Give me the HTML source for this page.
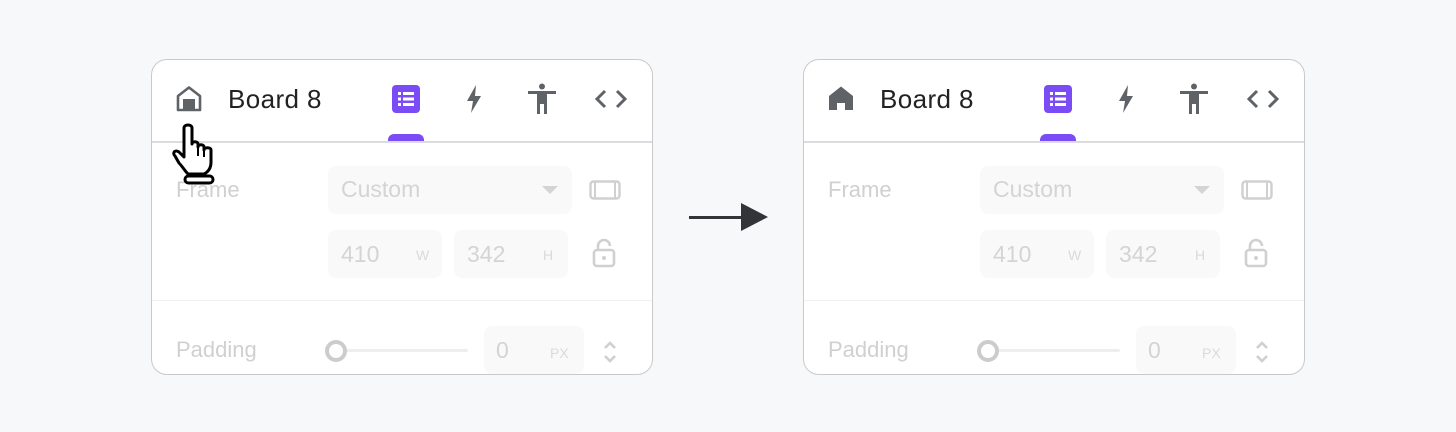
<!DOCTYPE html>
<html><head><meta charset="utf-8"><style>
*{margin:0;padding:0;box-sizing:border-box}
body{width:1456px;height:432px;background:#f7f8fa;position:relative;overflow:hidden;font-family:"Liberation Sans",Roboto,sans-serif}
.p{position:absolute;top:59px;width:502px;height:316px;background:#fff;border:1px solid #c9c9cc;border-radius:16px;overflow:hidden}
.a{position:absolute}
.t{position:absolute;font-size:26px;color:#222;top:24px;left:76px;letter-spacing:0.4px}
.hd{position:absolute;left:0;right:0;top:81px;height:2px;background:#dcdce0}
.ind{position:absolute;left:236px;top:74px;width:36px;height:8px;background:#7b4cf5;border-radius:6px 6px 0 0}
.lbl{position:absolute;font-size:22px;color:#d0d0d0}
.f{position:absolute;background:#f9f9f9;border-radius:8px}
.fv{position:absolute;font-size:23px;color:#d4d4d4}
.fu{position:absolute;font-size:14px;color:#dadada}
.d2{position:absolute;left:0;right:0;top:240px;height:1px;background:#f0f0f0}
</style></head><body>

<div class="p" style="left:151px">
  <svg class="a" style="left:24px;top:26px" width="26" height="26" viewBox="0 0 26 26"><path d="M2 24V10L13 1.5 24 10V24Z" fill="none" stroke="#5f6368" stroke-width="2.6" stroke-linejoin="round"/><rect x="7" y="13" width="12" height="11" fill="#5f6368"/></svg>
  <div class="t">Board 8</div>
  <svg class="a" style="left:240px;top:25px" width="28" height="28" viewBox="0 0 28 28"><rect width="28" height="28" rx="4" fill="#7b4cf5"/><g fill="#fff"><rect x="6" y="7" width="3" height="3"/><rect x="11" y="7" width="11" height="3"/><rect x="6" y="12.5" width="3" height="3"/><rect x="11" y="12.5" width="11" height="3"/><rect x="6" y="18" width="3" height="3"/><rect x="11" y="18" width="11" height="3"/></g></svg>
  <svg class="a" style="left:313px;top:24px" width="18" height="30" viewBox="0 0 18 30"><path d="M11 1L2 17h6L6 29l10-17h-6z" fill="#5f6368"/></svg>
  <svg class="a" style="left:375px;top:23px" width="30" height="32" viewBox="0 0 30 32"><circle cx="15" cy="3.5" r="3" fill="#5f6368"/><path d="M1 8h28v3H20v20h-3V21h-4v10h-3V11H1z" fill="#5f6368"/></svg>
  <svg class="a" style="left:443px;top:29px" width="32" height="20" viewBox="0 0 32 20"><path d="M10 2L2 10l8 8M22 2l8 8-8 8" fill="none" stroke="#5f6368" stroke-width="3"/></svg>
  <div class="ind"></div><div class="hd"></div>
  <div class="lbl" style="left:24px;top:117px">Frame</div>
  <div class="f" style="left:176px;top:106px;width:244px;height:48px"></div>
  <div class="fv" style="left:189px;top:116px">Custom</div>
  <svg class="a" style="left:390px;top:126px" width="16" height="9"><path d="M0 0h16L8 8z" fill="#d4d4d4"/></svg>
  <svg class="a" style="left:437px;top:120px" width="32" height="20"><rect x="1.5" y="1.5" width="29" height="17" rx="3" fill="none" stroke="#d0d0d0" stroke-width="2.4"/><path d="M6 2v16M26 2v16" stroke="#d0d0d0" stroke-width="2"/></svg>
  <div class="f" style="left:176px;top:170px;width:114px;height:48px"></div>
  <div class="fv" style="left:189px;top:181px">410</div><div class="fu" style="left:264px;top:187px">W</div>
  <div class="f" style="left:302px;top:170px;width:114px;height:48px"></div>
  <div class="fv" style="left:315px;top:181px">342</div><div class="fu" style="left:391px;top:187px">H</div>
  <svg class="a" style="left:440px;top:178px" width="24" height="30"><path d="M6 12V8a6 6 0 0 1 12 0" fill="none" stroke="#d0d0d0" stroke-width="2.6"/><rect x="2" y="12" width="20" height="16" rx="3" fill="none" stroke="#d0d0d0" stroke-width="2.6"/><circle cx="12" cy="20" r="2" fill="#d0d0d0"/></svg>
  <div class="d2"></div>
  <div class="lbl" style="left:24px;top:277px">Padding</div>
  <div class="a" style="left:180px;top:289px;width:136px;height:3px;background:#eee;border-radius:2px"></div>
  <div class="a" style="left:173px;top:280px;width:22px;height:22px;border-radius:50%;border:4px solid #ccc;background:#fff"></div>
  <div class="f" style="left:332px;top:266px;width:100px;height:48px"></div>
  <div class="fv" style="left:344px;top:277px">0</div><div class="fu" style="left:398px;top:285px">PX</div>
  <svg class="a" style="left:451px;top:280px" width="14" height="24"><path d="M2 8l5-5 5 5M2 16l5 5 5-5" fill="none" stroke="#d0d0d0" stroke-width="2.6"/></svg>
</div>

<svg class="a" style="left:170px;top:122px" width="48" height="64" viewBox="0 0 48 64"><path d="M14 6c0-4 8-4 8 0v16c0-3 6-3 6 0v3c0-3 6-3 6 0v3c0-3 7-3 7 0v12c0 6-3 10-7 12H18c-3-3-6-8-9-11L5 34c-3-3 0-7 4-4l5 5z" fill="#fff" stroke="#000" stroke-width="3" stroke-linejoin="round"/><path d="M28 26v8M34 29v6" stroke="#000" stroke-width="2"/><rect x="15" y="54" width="28" height="7" rx="3.5" fill="#fff" stroke="#000" stroke-width="3"/></svg>

<div class="a" style="left:689px;top:216px;width:54px;height:3px;background:#333438"></div>
<svg class="a" style="left:741px;top:203px" width="28" height="28"><path d="M0 0L27 14 0 28z" fill="#333438"/></svg>

<div class="p" style="left:803px">
  <svg class="a" style="left:24px;top:26px" width="26" height="26" viewBox="0 0 26 26"><path d="M1 24V10L13 0.5 25 10V24H17V17H9V24Z" fill="#5f6368"/></svg>
  <div class="t">Board 8</div>
  <svg class="a" style="left:240px;top:25px" width="28" height="28" viewBox="0 0 28 28"><rect width="28" height="28" rx="4" fill="#7b4cf5"/><g fill="#fff"><rect x="6" y="7" width="3" height="3"/><rect x="11" y="7" width="11" height="3"/><rect x="6" y="12.5" width="3" height="3"/><rect x="11" y="12.5" width="11" height="3"/><rect x="6" y="18" width="3" height="3"/><rect x="11" y="18" width="11" height="3"/></g></svg>
  <svg class="a" style="left:313px;top:24px" width="18" height="30" viewBox="0 0 18 30"><path d="M11 1L2 17h6L6 29l10-17h-6z" fill="#5f6368"/></svg>
  <svg class="a" style="left:375px;top:23px" width="30" height="32" viewBox="0 0 30 32"><circle cx="15" cy="3.5" r="3" fill="#5f6368"/><path d="M1 8h28v3H20v20h-3V21h-4v10h-3V11H1z" fill="#5f6368"/></svg>
  <svg class="a" style="left:443px;top:29px" width="32" height="20" viewBox="0 0 32 20"><path d="M10 2L2 10l8 8M22 2l8 8-8 8" fill="none" stroke="#5f6368" stroke-width="3"/></svg>
  <div class="ind"></div><div class="hd"></div>
  <div class="lbl" style="left:24px;top:117px">Frame</div>
  <div class="f" style="left:176px;top:106px;width:244px;height:48px"></div>
  <div class="fv" style="left:189px;top:116px">Custom</div>
  <svg class="a" style="left:390px;top:126px" width="16" height="9"><path d="M0 0h16L8 8z" fill="#d4d4d4"/></svg>
  <svg class="a" style="left:437px;top:120px" width="32" height="20"><rect x="1.5" y="1.5" width="29" height="17" rx="3" fill="none" stroke="#d0d0d0" stroke-width="2.4"/><path d="M6 2v16M26 2v16" stroke="#d0d0d0" stroke-width="2"/></svg>
  <div class="f" style="left:176px;top:170px;width:114px;height:48px"></div>
  <div class="fv" style="left:189px;top:181px">410</div><div class="fu" style="left:264px;top:187px">W</div>
  <div class="f" style="left:302px;top:170px;width:114px;height:48px"></div>
  <div class="fv" style="left:315px;top:181px">342</div><div class="fu" style="left:391px;top:187px">H</div>
  <svg class="a" style="left:440px;top:178px" width="24" height="30"><path d="M6 12V8a6 6 0 0 1 12 0" fill="none" stroke="#d0d0d0" stroke-width="2.6"/><rect x="2" y="12" width="20" height="16" rx="3" fill="none" stroke="#d0d0d0" stroke-width="2.6"/><circle cx="12" cy="20" r="2" fill="#d0d0d0"/></svg>
  <div class="d2"></div>
  <div class="lbl" style="left:24px;top:277px">Padding</div>
  <div class="a" style="left:180px;top:289px;width:136px;height:3px;background:#eee;border-radius:2px"></div>
  <div class="a" style="left:173px;top:280px;width:22px;height:22px;border-radius:50%;border:4px solid #ccc;background:#fff"></div>
  <div class="f" style="left:332px;top:266px;width:100px;height:48px"></div>
  <div class="fv" style="left:344px;top:277px">0</div><div class="fu" style="left:398px;top:285px">PX</div>
  <svg class="a" style="left:451px;top:280px" width="14" height="24"><path d="M2 8l5-5 5 5M2 16l5 5 5-5" fill="none" stroke="#d0d0d0" stroke-width="2.6"/></svg>
</div>
</body></html>
